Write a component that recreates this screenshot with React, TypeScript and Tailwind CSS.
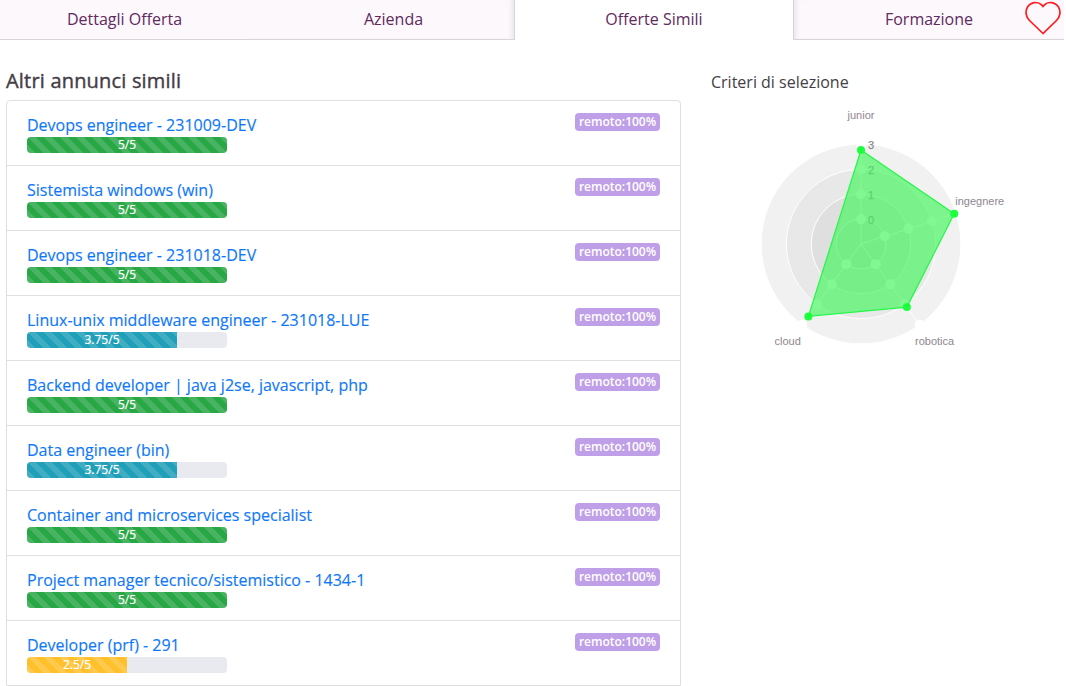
const offers = [
  { title: 'Devops engineer - 231009-DEV', score: 5 },
  { title: 'Sistemista windows (win)', score: 5 },
  { title: 'Devops engineer - 231018-DEV', score: 5 },
  { title: 'Linux-unix middleware engineer - 231018-LUE', score: 3.75 },
  { title: 'Backend developer | java j2se, javascript, php', score: 5 },
  { title: 'Data engineer (bin)', score: 3.75 },
  { title: 'Container and microservices specialist', score: 5 },
  { title: 'Project manager tecnico/sistemistico - 1434-1', score: 5 },
  { title: 'Developer (prf) - 291', score: 2.5 },
];

const stripes =
  'bg-[linear-gradient(45deg,rgba(255,255,255,.15)_25%,transparent_25%,transparent_50%,rgba(255,255,255,.15)_50%,rgba(255,255,255,.15)_75%,transparent_75%,transparent)] bg-[length:16px_16px]';

function barColor(score: number) {
  if (score >= 5) return 'bg-[#28a745]';
  if (score >= 3) return 'bg-[#1f9fb8]';
  return 'bg-[#ffc02c]';
}

function Tabs() {
  const side = 'h-10 border-b border-[#d8d5d9] bg-[#fdf8fc] text-center leading-[38px]';
  return (
    <nav className="flex w-[1064px] text-[16px] text-[#5f2a5e]">
      <div className={`${side} w-[249px]`}>Dettagli Offerta</div>
      <div className={`${side} w-[266px] border-r pl-[24px] shadow-[inset_-5px_0_5px_-3px_#e6e6eb]`}>Azienda</div>
      <div className="h-10 w-[278px] bg-white text-center leading-[38px]">Offerte Simili</div>
      <div className={`${side} relative w-[271px] border-l shadow-[inset_5px_0_5px_-3px_#e6e6eb]`}>
        Formazione
        <svg className="absolute top-0 right-[3px]" width="36" height="36" viewBox="0 0 36 36" fill="none" stroke="#fc1c20" strokeWidth="1.7">
          <path d="M18 33.5 L4.5 20.5 C.5 16.5 0 11 2.7 6.8 C6 1.8 13 1.2 16.6 4.9 L18 6.4 L19.4 4.9 C23 1.2 30 1.8 33.3 6.8 C36 11 35.5 16.5 31.5 20.5 Z" />
        </svg>
      </div>
    </nav>
  );
}

const CX = 111;
const CY = 144;
const at = (deg: number, r: number) => ({
  x: CX + r * Math.sin((deg * Math.PI) / 180),
  y: CY - r * Math.cos((deg * Math.PI) / 180),
});
const axes = [
  { deg: 0, value: 94 },
  { deg: 72, value: 98 },
  { deg: 144, value: 78 },
  { deg: 216, value: 89.5 },
];
const rings = [
  { r: 99.8, fill: '#f1f1f1' },
  { r: 74.6, fill: '#e8e8e8' },
  { r: 49.8, fill: '#dfdfdf' },
  { r: 24.9, fill: '#d9d9d9' },
];

function Radar() {
  const points = axes.map((a) => at(a.deg, a.value));
  return (
    <svg className="block" width="270" height="260" viewBox="0 0 270 260" fontFamily="'Liberation Sans', Arial, sans-serif" fontSize="11" fill="#8f868f">
      {rings.map((g) => (
        <circle key={g.r} cx={CX} cy={CY} r={g.r} fill={g.fill} stroke="#fff" />
      ))}
      {axes.map((a) => {
        const end = at(a.deg, 99);
        return <line key={a.deg} x1={CX} y1={CY} x2={end.x} y2={end.y} stroke="#fff" />;
      })}
      {axes.flatMap((a) =>
        rings.map((g) => {
          const p = at(a.deg, g.r);
          return <circle key={`${a.deg}-${g.r}`} cx={p.x} cy={p.y} r="5" fill="#fff" />;
        }),
      )}
      {[3, 2, 1, 0].map((n, i) => (
        <text key={n} x="118" y={49 + i * 25} stroke="#8f868f" strokeWidth="0.25">{n}</text>
      ))}
      <polygon points={points.map((p) => `${p.x},${p.y}`).join(' ')} fill="#45f45e" fillOpacity="0.67" stroke="#22f848" strokeWidth="1.2" />
      {points.map((p) => (
        <circle key={p.x} cx={p.x} cy={p.y} r="4" fill="#1bff3c" />
      ))}
      <text x="111" y="19" textAnchor="middle">junior</text>
      <text x="205.3" y="105">ingegnere</text>
      <text x="165" y="245">robotica</text>
      <text x="24.5" y="245">cloud</text>
    </svg>
  );
}

export default function App() {
  return (
    <div className="h-[686px] w-[1066px] overflow-hidden bg-white font-['Open_Sans',sans-serif]">
      <Tabs />
      <main className="flex">
        <section className="ml-[6px] w-[675px] pt-[26px]">
          <h2 className="mb-[4px] h-[30px] text-[20px] leading-[30px] tracking-[0.19px] text-[#443d46] [-webkit-text-stroke:0.4px_#443d46]">Altri annunci simili</h2>
          <ul className="rounded-t-[4px] border border-[#dfdfdf]">
            {offers.map((o) => (
              <li key={o.title} className="flex h-[65px] items-start justify-between border-b border-[#dfdfdf] px-[20px] pt-[12px] last:h-[64px] last:border-b-0">
                <div>
                  <a className="block h-[24px] text-[16px] leading-[24px] whitespace-nowrap text-[#0f78fa] [-webkit-text-stroke:0.15px_#0f78fa]">{o.title}</a>
                  <div className="flex h-[16px] w-[200px] overflow-hidden rounded-[4px] bg-[#e9eaef]">
                    <div
                      className={`text-center text-[12px] leading-[16px] text-white [-webkit-text-stroke:0.2px_#fff] ${stripes} ${barColor(o.score)}`}
                      style={{ width: `${o.score * 20}%` }}
                    >
                      {o.score}/5
                    </div>
                  </div>
                </div>
                <span className="h-[18px] w-[85px] rounded-[4px] bg-[#bf9fe8] text-center text-[12px] leading-[18px] font-semibold text-white">remoto:100%</span>
              </li>
            ))}
          </ul>
        </section>
        <aside className="ml-[30px] pt-[30px]">
          <h3 className="h-[24px] text-[16px] leading-[24px] text-[#443d46]">Criteri di selezione</h3>
          <div className="ml-[39px] pt-[6px]">
            <Radar />
          </div>
        </aside>
      </main>
    </div>
  );
}
